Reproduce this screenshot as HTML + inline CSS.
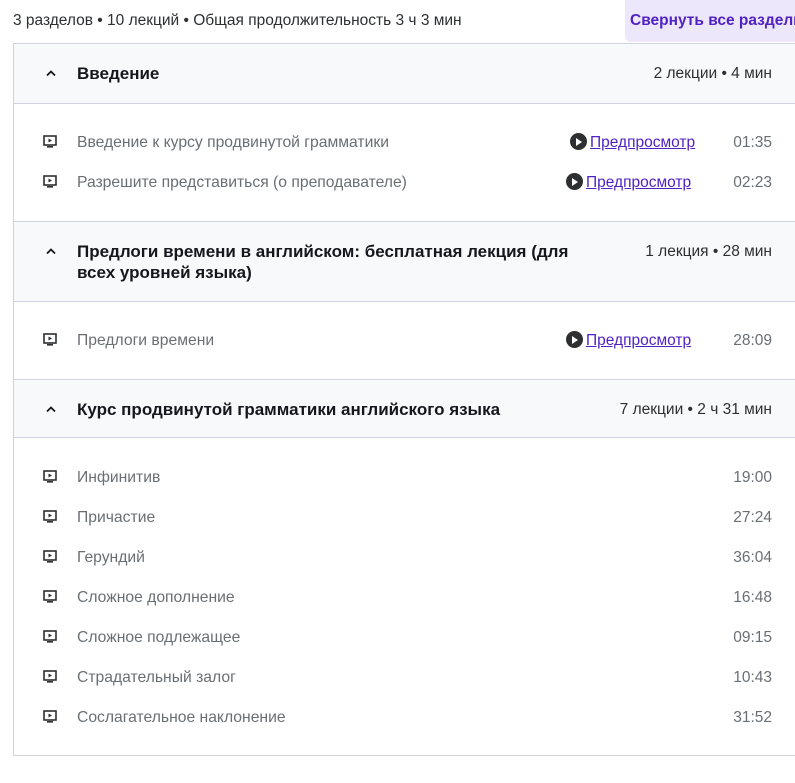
<!DOCTYPE html>
<html><head><meta charset="utf-8"><style>
*{margin:0;padding:0;box-sizing:border-box}
body{width:795px;height:783px;background:#fff;font-family:"Liberation Sans","DejaVu Sans",sans-serif;color:#2d2f31;position:relative;overflow:hidden}
.a{position:absolute;white-space:nowrap}
.top{left:13px;top:12px;font-size:15.5px;color:#2d2f31}
.btn{left:625px;top:0;width:180px;height:42px;background:#ece7fa;border-bottom-left-radius:6px;color:#5022c3;font-weight:bold;font-size:15.5px;padding:12px 0 0 5px}
.box{position:absolute;left:13px;top:43px;width:800px;height:713px;border:1px solid #d1d2e0;border-right:none}
.hd{position:absolute;left:13px;width:782px;background:#f7f9fa;border-top:1px solid #d1d2e0;border-bottom:1px solid #d1d2e0;border-left:1px solid #d1d2e0}
.ht{font-weight:bold;font-size:17px;color:#16161d;line-height:21px}
.hm{font-size:15.5px;color:#2d2f31}
.it{font-size:15.7px;color:#6a6f73}
.tm{font-size:15.5px;color:#6a6f73;text-align:right}
.pv{font-size:15.5px;color:#5022c3;text-decoration:underline}
.ic{position:absolute;width:14px;height:13px}
.pc{display:inline-block;width:17px;height:17px;border-radius:50%;background:#2d2f31;vertical-align:-3px;position:relative;margin-right:3px}
.pc:after{content:"";position:absolute;left:6px;top:4.5px;border-left:6px solid #fff;border-top:4px solid transparent;border-bottom:4px solid transparent}
</style></head><body>
<div class="a top">3 разделов • 10 лекций • Общая продолжительность 3 ч 3 мин</div>
<div class="a btn">Свернуть все разделы</div>
<div class="box"></div>

<div class="hd" style="top:43px;height:61px"></div>
<svg class="a" style="left:45px;top:69px" width="12" height="8" viewBox="0 0 12 8"><path d="M2 6.5L6 2.5L10 6.5" fill="none" stroke="#16161d" stroke-width="1.8"/></svg>
<div class="a ht" style="left:77px;top:63px">Введение</div>
<div class="a hm" style="right:23px;top:65px">2 лекции • 4 мин</div>

<div class="hd" style="top:221px;height:81px"></div>
<svg class="a" style="left:45px;top:247px" width="12" height="8" viewBox="0 0 12 8"><path d="M2 6.5L6 2.5L10 6.5" fill="none" stroke="#16161d" stroke-width="1.8"/></svg>
<div class="a ht" style="left:77px;top:241px">Предлоги времени в английском: бесплатная лекция (для<br>всех уровней языка)</div>
<div class="a hm" style="right:23px;top:243px">1 лекция • 28 мин</div>

<div class="hd" style="top:379px;height:59px"></div>
<svg class="a" style="left:45px;top:405px" width="12" height="8" viewBox="0 0 12 8"><path d="M2 6.5L6 2.5L10 6.5" fill="none" stroke="#16161d" stroke-width="1.8"/></svg>
<div class="a ht" style="left:77px;top:399px">Курс продвинутой грамматики английского языка</div>
<div class="a hm" style="right:23px;top:401px">7 лекции • 2 ч 31 мин</div>

<div id="items"></div>
<script>
var rows=[
[142,"Введение к курсу продвинутой грамматики","01:35",570],
[182,"Разрешите представиться (о преподавателе)","02:23",566],
[340,"Предлоги времени","28:09",566],
[477,"Инфинитив","19:00"],
[517,"Причастие","27:24"],
[557,"Герундий","36:04"],
[597,"Сложное дополнение","16:48"],
[637,"Сложное подлежащее","09:15"],
[677,"Страдательный залог","10:43"],
[717,"Сослагательное наклонение","31:52"]];
var h="";
rows.forEach(function(r){
var y=r[0];
h+='<svg class="ic" style="left:43px;top:'+(y-7)+'px" viewBox="0 0 14 13"><rect x="1" y="1" width="12" height="9" fill="none" stroke="#2d2f31" stroke-width="1.6"/><path d="M5.5 3.5L9 5.5L5.5 7.5Z" fill="#2d2f31"/><rect x="4" y="11" width="6" height="1.6" fill="#2d2f31"/></svg>';
h+='<div class="a it" style="left:77px;top:'+(y-8)+'px">'+r[1]+'</div>';
if(r[3])h+='<div class="a pv" style="left:'+r[3]+'px;top:'+(y-9)+'px"><span class="pc"></span>Предпросмотр</div>';
h+='<div class="a tm" style="right:23px;top:'+(y-8)+'px">'+r[2]+'</div>';
});
document.getElementById("items").innerHTML=h;
</script>
</body></html>
